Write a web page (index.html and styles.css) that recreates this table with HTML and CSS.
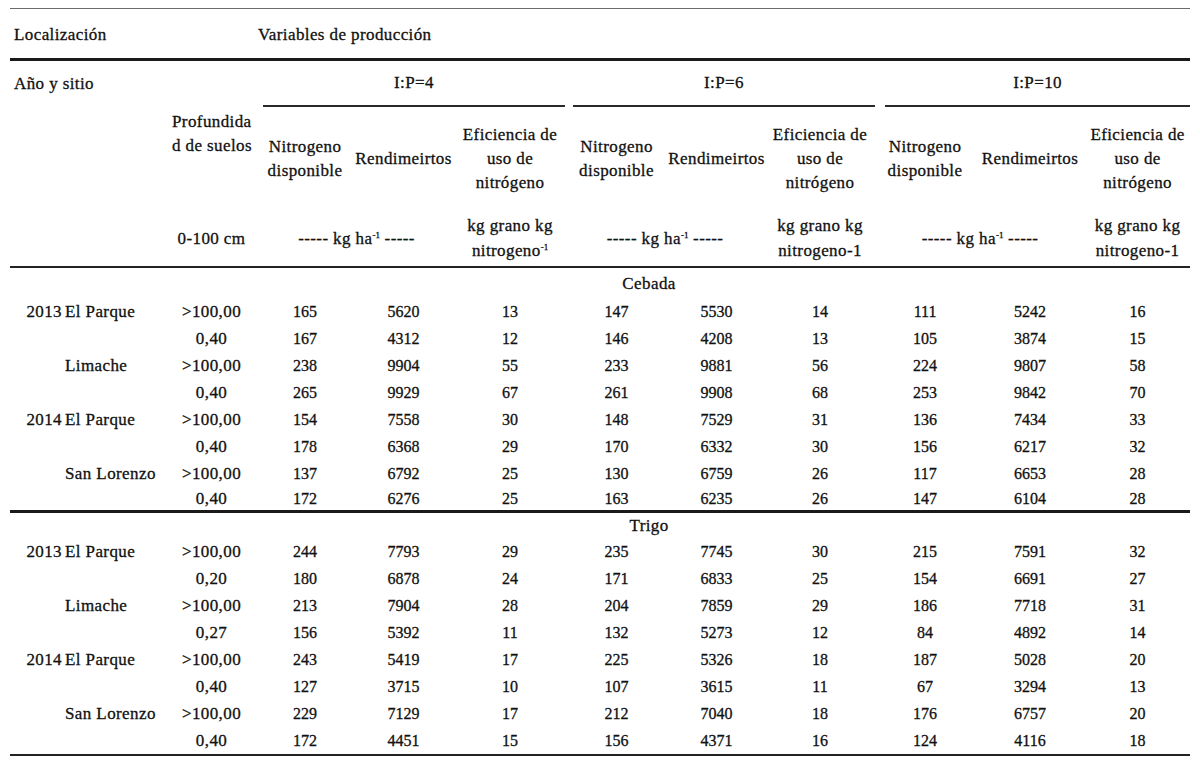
FILE: index.html
```html
<!DOCTYPE html>
<html lang="es">
<head>
<meta charset="utf-8">
<title>Variables de producción</title>
<link rel="stylesheet" href="styles.css">
</head>
<body>
<div class="page">
<table class="t">
  <colgroup>
    <col class="c-year"><col class="c-site"><col class="c-depth">
    <col class="c-n4"><col class="c-r4"><col class="c-e4">
    <col class="c-n6"><col class="c-r6"><col class="c-e6">
    <col class="c-n10"><col class="c-r10"><col class="c-e10">
  </colgroup>
  <thead>
    <tr class="r-top">
      <th colspan="3" class="left">Localización</th>
      <th colspan="9" class="left">Variables de producción</th>
    </tr>
    <tr class="r-grp">
      <th colspan="3" class="left">Año y sitio</th>
      <th colspan="3" class="grp"><div class="grp-in">I:P=4</div></th>
      <th colspan="3" class="grp g6"><div class="grp-in">I:P=6</div></th>
      <th colspan="3" class="grp g10"><div class="grp-in">I:P=10</div></th>
    </tr>
    <tr class="r-head">
      <th colspan="2"></th>
      <th class="top">Profundida<br>d de suelos</th>
      <th>Nitrogeno<br>disponible</th>
      <th>Rendimeirtos</th>
      <th>Eficiencia de<br>uso de<br>nitrógeno</th>
      <th>Nitrogeno<br>disponible</th>
      <th>Rendimeirtos</th>
      <th>Eficiencia de<br>uso de<br>nitrógeno</th>
      <th>Nitrogeno<br>disponible</th>
      <th>Rendimeirtos</th>
      <th>Eficiencia de<br>uso de<br>nitrógeno</th>
    </tr>
    <tr class="r-unit">
      <th colspan="2"></th>
      <th>0-100 cm</th>
      <th colspan="2">----- kg ha<sup>-1</sup> -----</th>
      <th>kg grano kg<br>nitrogeno<sup>-1</sup></th>
      <th colspan="2">----- kg ha<sup>-1</sup> -----</th>
      <th>kg grano kg<br>nitrogeno-1</th>
      <th colspan="2">----- kg ha<sup>-1</sup> -----</th>
      <th>kg grano kg<br>nitrogeno-1</th>
    </tr>
  </thead>
  <tbody class="sec">
    <tr class="r-crop"><td colspan="12">Cebada</td></tr>
    <tr><td class="yr">2013</td><td class="site">El Parque</td><td class="dp">&gt;100,00</td><td>165</td><td>5620</td><td>13</td><td>147</td><td>5530</td><td>14</td><td>111</td><td>5242</td><td>16</td></tr>
    <tr><td></td><td></td><td class="dp">0,40</td><td>167</td><td>4312</td><td>12</td><td>146</td><td>4208</td><td>13</td><td>105</td><td>3874</td><td>15</td></tr>
    <tr><td></td><td class="site">Limache</td><td class="dp">&gt;100,00</td><td>238</td><td>9904</td><td>55</td><td>233</td><td>9881</td><td>56</td><td>224</td><td>9807</td><td>58</td></tr>
    <tr><td></td><td></td><td class="dp">0,40</td><td>265</td><td>9929</td><td>67</td><td>261</td><td>9908</td><td>68</td><td>253</td><td>9842</td><td>70</td></tr>
    <tr><td class="yr">2014</td><td class="site">El Parque</td><td class="dp">&gt;100,00</td><td>154</td><td>7558</td><td>30</td><td>148</td><td>7529</td><td>31</td><td>136</td><td>7434</td><td>33</td></tr>
    <tr><td></td><td></td><td class="dp">0,40</td><td>178</td><td>6368</td><td>29</td><td>170</td><td>6332</td><td>30</td><td>156</td><td>6217</td><td>32</td></tr>
    <tr><td></td><td class="site">San Lorenzo</td><td class="dp">&gt;100,00</td><td>137</td><td>6792</td><td>25</td><td>130</td><td>6759</td><td>26</td><td>117</td><td>6653</td><td>28</td></tr>
    <tr class="r-last"><td></td><td></td><td class="dp">0,40</td><td>172</td><td>6276</td><td>25</td><td>163</td><td>6235</td><td>26</td><td>147</td><td>6104</td><td>28</td></tr>
  </tbody>
  <tbody class="sec">
    <tr class="r-crop r-crop2"><td colspan="12">Trigo</td></tr>
    <tr><td class="yr">2013</td><td class="site">El Parque</td><td class="dp">&gt;100,00</td><td>244</td><td>7793</td><td>29</td><td>235</td><td>7745</td><td>30</td><td>215</td><td>7591</td><td>32</td></tr>
    <tr><td></td><td></td><td class="dp">0,20</td><td>180</td><td>6878</td><td>24</td><td>171</td><td>6833</td><td>25</td><td>154</td><td>6691</td><td>27</td></tr>
    <tr><td></td><td class="site">Limache</td><td class="dp">&gt;100,00</td><td>213</td><td>7904</td><td>28</td><td>204</td><td>7859</td><td>29</td><td>186</td><td>7718</td><td>31</td></tr>
    <tr><td></td><td></td><td class="dp">0,27</td><td>156</td><td>5392</td><td>11</td><td>132</td><td>5273</td><td>12</td><td>84</td><td>4892</td><td>14</td></tr>
    <tr><td class="yr">2014</td><td class="site">El Parque</td><td class="dp">&gt;100,00</td><td>243</td><td>5419</td><td>17</td><td>225</td><td>5326</td><td>18</td><td>187</td><td>5028</td><td>20</td></tr>
    <tr><td></td><td></td><td class="dp">0,40</td><td>127</td><td>3715</td><td>10</td><td>107</td><td>3615</td><td>11</td><td>67</td><td>3294</td><td>13</td></tr>
    <tr><td></td><td class="site">San Lorenzo</td><td class="dp">&gt;100,00</td><td>229</td><td>7129</td><td>17</td><td>212</td><td>7040</td><td>18</td><td>176</td><td>6757</td><td>20</td></tr>
    <tr class="r-end"><td></td><td></td><td class="dp">0,40</td><td>172</td><td>4451</td><td>15</td><td>156</td><td>4371</td><td>16</td><td>124</td><td>4116</td><td>18</td></tr>
  </tbody>
</table>
</div>
</body>
</html>
```

FILE: styles.css
```css
html, body {
  margin: 0;
  padding: 0;
  background: #ffffff;
}

.page {
  padding: 8px 10px 0 10px;
}

.t {
  width: 1180px;
  table-layout: fixed;
  border-collapse: collapse;
  border-spacing: 0;
  font-family: "Liberation Serif", "Times New Roman", serif;
  font-size: 16px;
  color: #111111;
  -webkit-text-stroke: 0.3px #111111;
}

.c-year { width: 52px; }
.c-site { width: 103px; }
.c-depth { width: 93px; }
.c-n4 { width: 94px; }
.c-r4 { width: 103px; }
.c-e4 { width: 110px; }
.c-n6 { width: 103px; }
.c-r6 { width: 97px; }
.c-e6 { width: 110px; }
.c-n10 { width: 100px; }
.c-r10 { width: 110px; }
.c-e10 { width: 105px; }

.t th, .t td {
  padding: 0;
  font-weight: normal;
  text-align: center;
  vertical-align: middle;
  white-space: nowrap;
}

.t th {
  font-size: 17px;
  letter-spacing: 0.4px;
}

.t th.left {
  text-align: left;
  padding-left: 4px;
}

.r-top th {
  border-top: 1px solid #6a6a6a;
  border-bottom: 3px solid #1a1a1a;
  height: 46px;
  padding-top: 3px;
}

.r-top th + th.left {
  padding-left: 0;
}

.r-grp th {
  height: 46px;
}

.r-grp th.grp {
  padding: 0 0 0 5px;
  vertical-align: bottom;
}

.r-grp th.g6 { padding-left: 8px; }
.r-grp th.g10 { padding-left: 10px; }

.grp-in {
  line-height: 20px;
  padding-bottom: 12px;
  border-bottom: 2px solid #2a2a2a;
}

.r-head th {
  height: 100px;
  line-height: 24px;
}

.r-head th.top {
  vertical-align: top;
  padding-top: 3px;
  text-align: left;
  padding-left: 7px;
}

.r-unit th {
  height: 56px;
  line-height: 25px;
  border-bottom: 2px solid #222222;
}

sup {
  font-size: 9px;
  letter-spacing: 0;
  line-height: 0;
  vertical-align: 6px;
}

.sec td {
  height: 27px;
  line-height: 18px;
}

.sec td.yr,
.sec td.site,
.sec td.dp,
.r-crop td {
  font-size: 17px;
  letter-spacing: 0.4px;
}

.r-crop td {
  height: 28px;
  padding: 2px 0 0 98px;
}

.r-crop2 td {
  height: 25px;
  padding-top: 0;
}

.sec td.yr {
  text-align: right;
}

.sec td.site {
  text-align: left;
  padding-left: 3px;
}

.r-last td {
  height: 23px;
  border-bottom: 3px solid #1a1a1a;
}

.r-end td {
  border-bottom: 2px solid #222222;
}
```
